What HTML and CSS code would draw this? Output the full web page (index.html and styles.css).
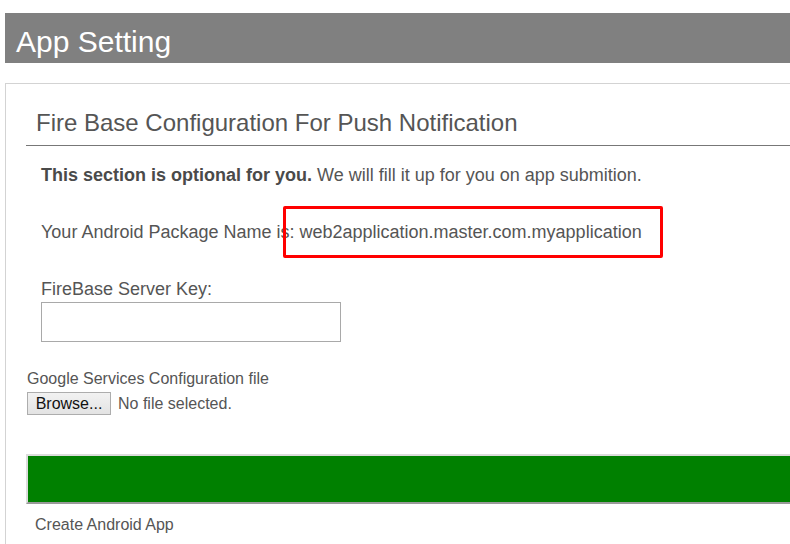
FILE: index.html
```html
<!DOCTYPE html>
<html>
<head>
<meta charset="utf-8">
<link rel="stylesheet" href="styles.css">
</head>
<body>
<div class="page">
  <div class="title-bar">App Setting</div>
  <div class="panel">
    <h2 class="section-title">Fire Base Configuration For Push Notification</h2>
    <div class="group">
      <p class="note"><b>This section is optional for you.</b> We will fill it up for you on app submition.</p>
      <p class="package">Your Android Package Name is: web2application.master.com.myapplication<span class="highlight"></span></p>
      <label class="field-label">FireBase Server Key:</label>
      <div class="text-input"></div>
    </div>
    <div class="file-label">Google Services Configuration file</div>
    <div class="file-row">
      <span class="browse">Browse...</span>
      <span class="file-status">No file selected.</span>
    </div>
    <div class="green-bar"></div>
    <div class="create">Create Android App</div>
  </div>
</div>
</body>
</html>
```

FILE: styles.css
```css
html, body {
  margin: 0;
  padding: 0;
  background: #fff;
  overflow: hidden;
}
body {
  font-family: "Liberation Sans", Arial, sans-serif;
  color: #555;
  width: 790px;
  height: 544px;
}
.page {
  padding: 13px 0 0 5px;
}
.title-bar {
  box-sizing: border-box;
  height: 50px;
  background: #808080;
  color: #fff;
  font-size: 30px;
  line-height: 34px;
  padding: 12px 0 0 11px;
}
.panel {
  margin-top: 20px;
  border: 1px solid #d3d3d3;
  border-right: none;
  padding-left: 20px;
  padding-bottom: 20px;
}
.section-title {
  margin: 25px 0 0 0;
  font-size: 24px;
  font-weight: normal;
  line-height: 27.6px;
  padding: 0 0 8px 10px;
  border-bottom: 1px solid #777;
  color: #555;
}
.group {
  padding-left: 15px;
}
.note, .package {
  margin: 0;
  font-size: 18px;
  line-height: 20.7px;
}
.note {
  margin-top: 19px;
  color: #555;
}
.note b {
  color: #4a4a4a;
}
.package {
  margin-top: 37px;
  position: relative;
}
.highlight {
  position: absolute;
  left: 242px;
  top: -16px;
  width: 374px;
  height: 46px;
  border: 3px solid #ff0000;
  border-radius: 2px;
}
.field-label {
  display: block;
  margin-top: 36px;
  font-size: 18px;
  line-height: 20.7px;
}
.text-input {
  box-sizing: border-box;
  margin-top: 2px;
  width: 300px;
  height: 40px;
  border: 1px solid #a9a9a9;
  background: #fff;
}
.file-label {
  margin-top: 28px;
  font-size: 16px;
  line-height: 18.4px;
  padding-left: 1px;
}
.file-row {
  margin-top: 4px;
  display: flex;
  align-items: center;
  gap: 7px;
  padding-left: 1px;
}
.browse {
  box-sizing: border-box;
  width: 84px;
  height: 23px;
  border: 1px solid #adadad;
  background: linear-gradient(#f2f2f2, #e3e3e3);
  color: #111;
  font-size: 16px;
  line-height: 21px;
  text-align: center;
}
.file-status {
  font-size: 16px;
  color: #555;
}
.green-bar {
  margin-top: 39px;
  height: 46px;
  background: #008000;
  border-top: 2px solid #dcdcdc;
  border-left: 2px solid #dcdcdc;
  border-bottom: 2px solid #999;
}
.create {
  margin-top: 12px;
  padding-left: 9px;
  font-size: 16px;
  line-height: 18.4px;
}
```
